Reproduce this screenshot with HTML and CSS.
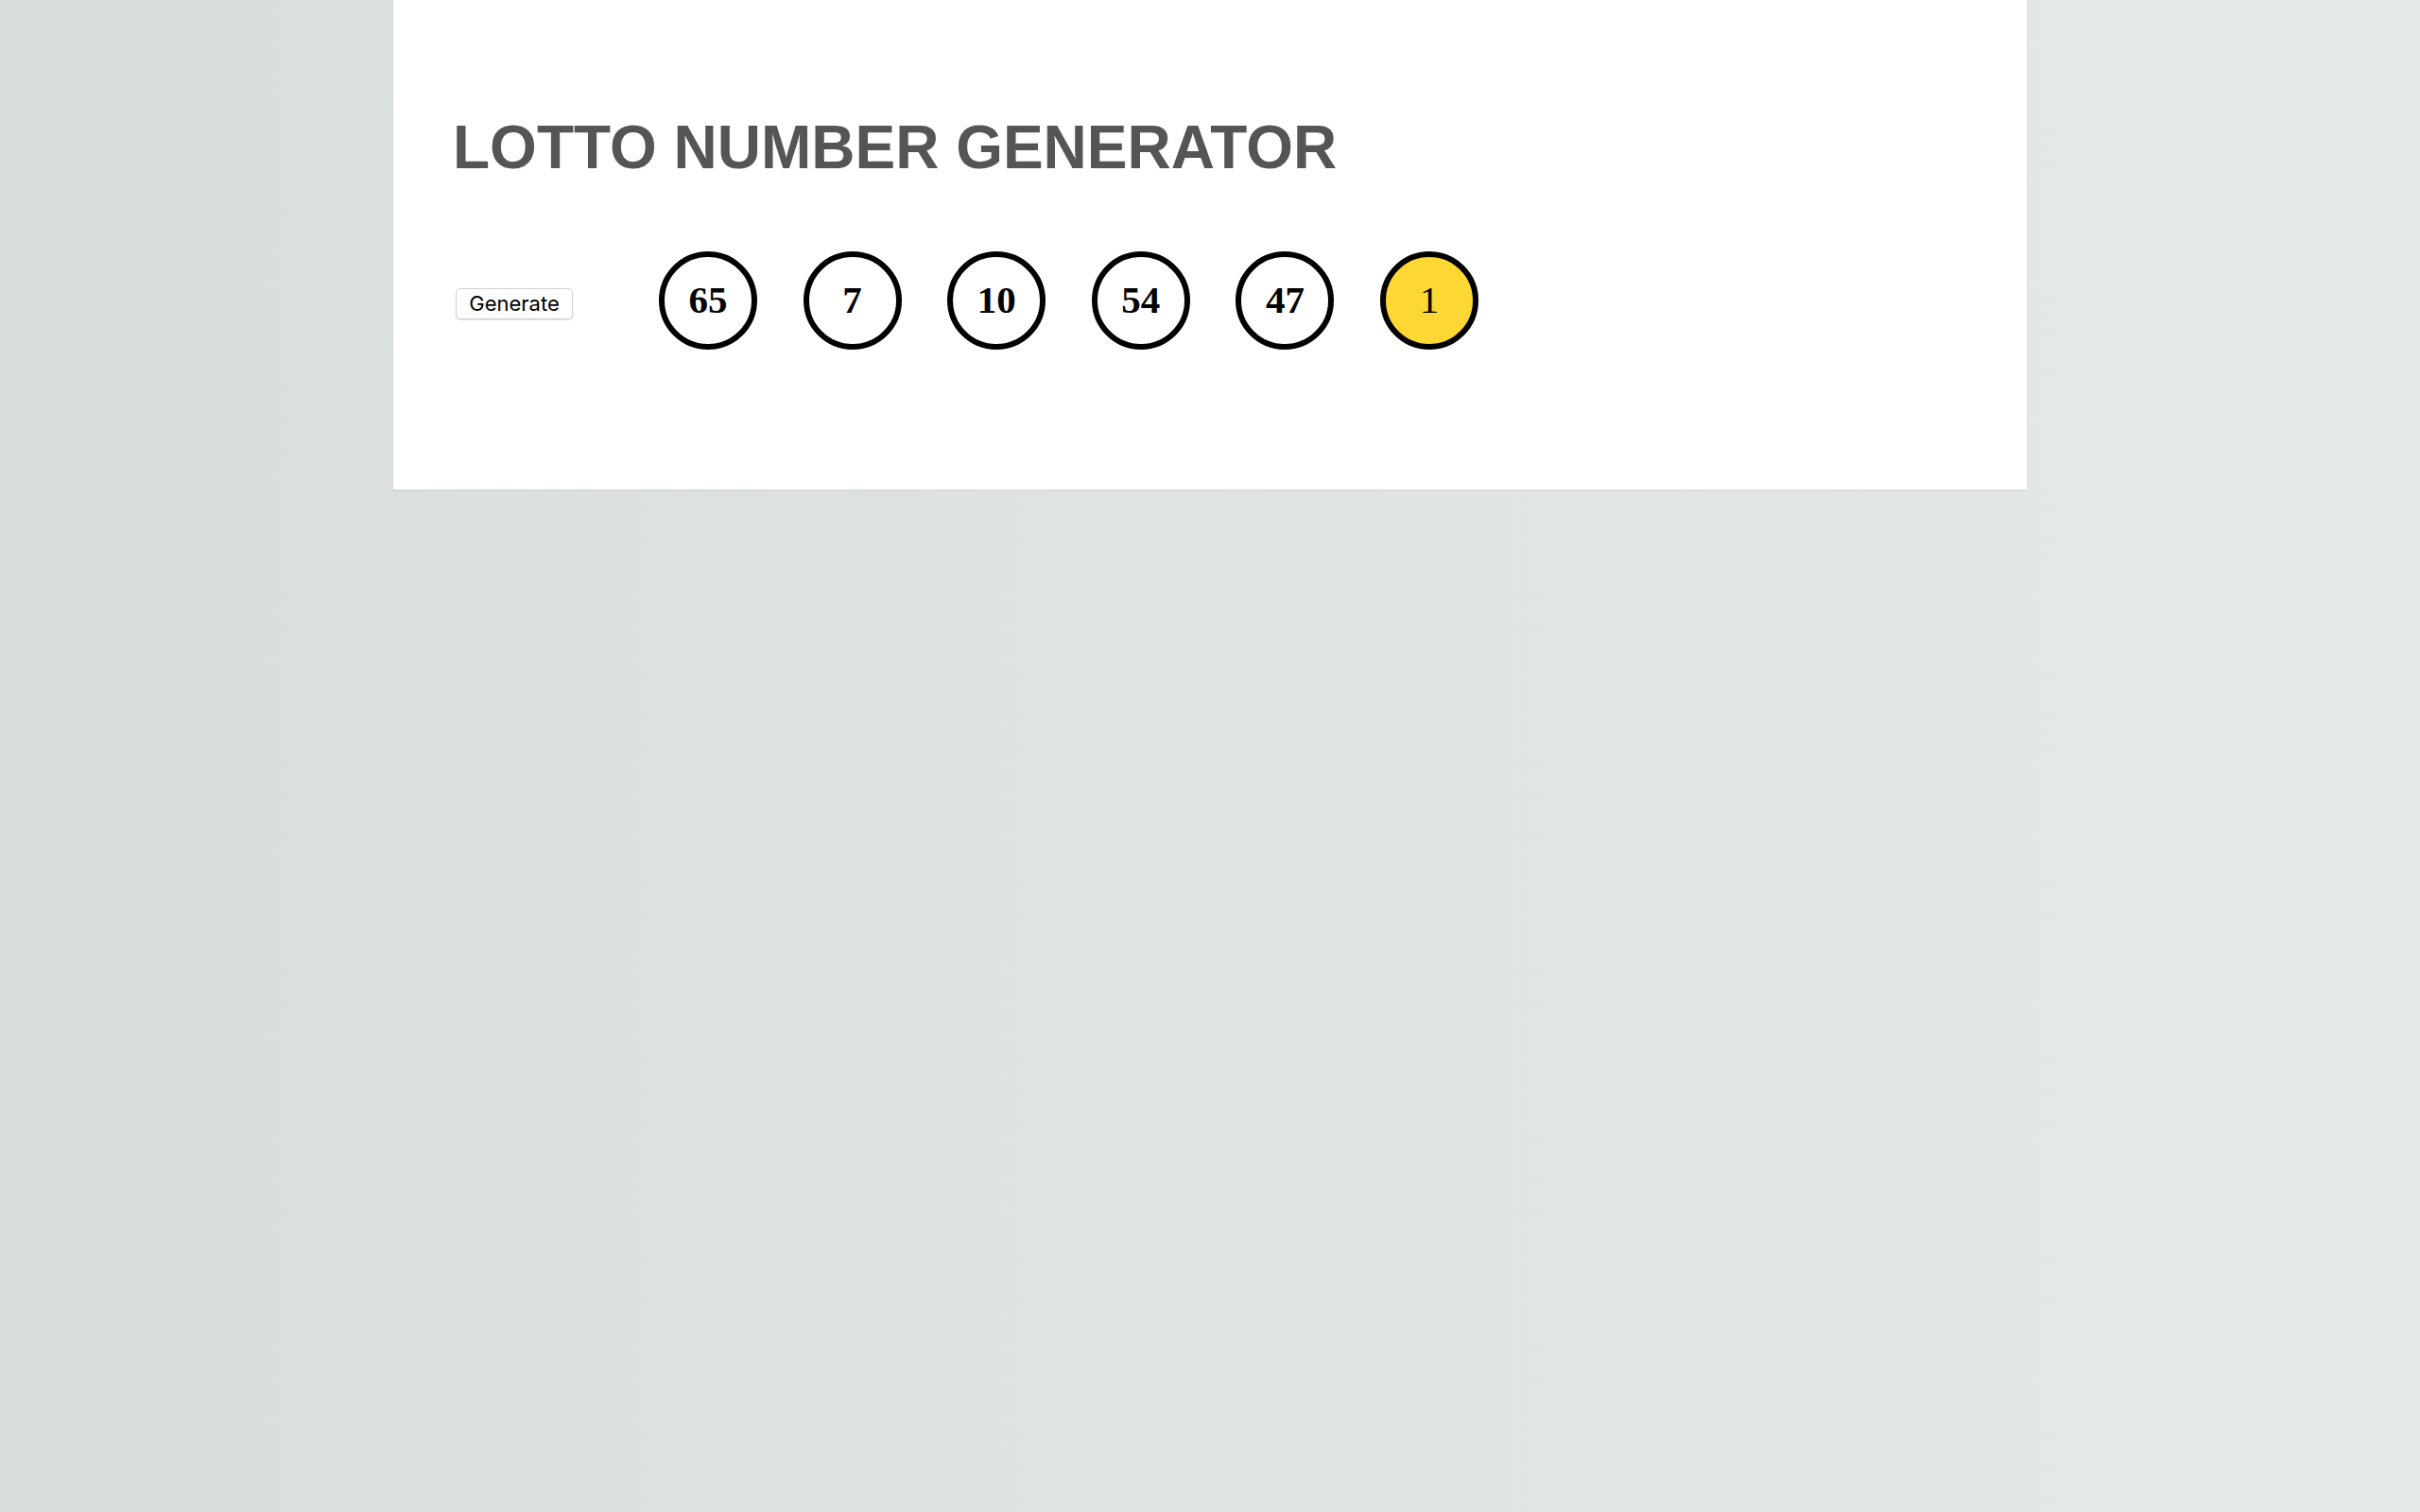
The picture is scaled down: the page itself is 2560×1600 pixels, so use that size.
FILE: index.html
```html
<!DOCTYPE html>
<html lang="en">
<head>
<meta charset="utf-8">
<title>Lotto Number Generator</title>
<link rel="stylesheet" href="styles.css">
</head>
<body>
<main class="card">
  <h1 class="title">LOTTO NUMBER GENERATOR</h1>
  <div class="row">
    <button class="generate" type="button">Generate</button>
    <div class="balls">
      <div class="ball">65</div>
      <div class="ball">7</div>
      <div class="ball">10</div>
      <div class="ball">54</div>
      <div class="ball">47</div>
      <div class="ball bonus">1</div>
    </div>
  </div>
</main>
</body>
</html>
```
FILE: styles.css
```css
html, body {
  margin: 0;
  padding: 0;
}

body {
  min-height: 100vh;
  background: linear-gradient(to right, #d8dedd 0%, #dee2e2 40%, #e6e9ea 100%);
  font-family: "Liberation Sans", Arial, sans-serif;
}

.card {
  box-sizing: border-box;
  width: 1728px;
  height: 518px;
  margin: 0 auto;
  padding: 124px 66px 0 66px;
  background: #ffffff;
  box-shadow: 0 1px 2px rgba(0, 0, 0, 0.07);
}

.title {
  margin: 0 0 0 -3px;
  font-family: "Liberation Sans", Arial, Helvetica, sans-serif;
  font-weight: 700;
  font-size: 64px;
  line-height: 64px;
  color: #555555;
}

.row {
  display: flex;
  align-items: center;
  margin-top: 78px;
}

.generate {
  box-sizing: border-box;
  width: 124px;
  height: 33px;
  margin-top: 6px;
  padding: 0;
  font-family: Inter, "Noto Sans", sans-serif;
  font-size: 22px;
  color: #000000;
  background: #ffffff;
  border: 1px solid #d0d0d0;
  border-radius: 5px;
  box-shadow: 0 1px 1px rgba(0, 0, 0, 0.12);
}

.balls {
  display: flex;
  gap: 48.6px;
  margin-left: 91px;
}

.ball {
  box-sizing: border-box;
  width: 104px;
  height: 104px;
  padding-bottom: 3px;
  border: 6px solid #000000;
  border-radius: 50%;
  display: flex;
  align-items: center;
  justify-content: center;
  font-family: "Liberation Serif", "Times New Roman", serif;
  font-weight: 700;
  font-size: 41px;
  color: #000000;
  background: #ffffff;
}

.ball.bonus {
  background: #fdd733;
  font-weight: 400;
}
```
